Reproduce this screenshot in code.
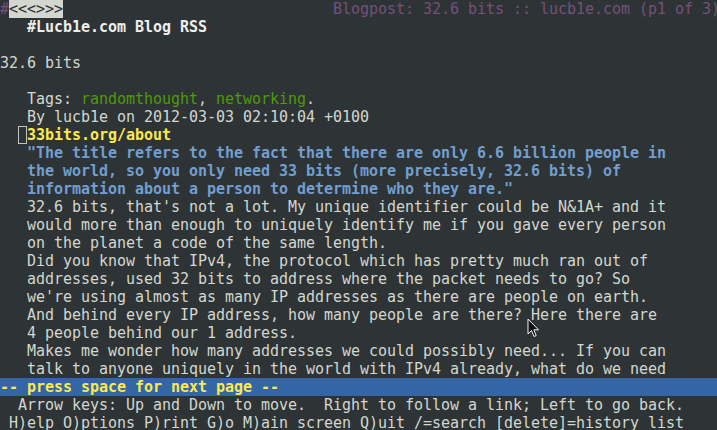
import React from 'react';

const body = [
  "   32.6 bits, that's not a lot. My unique identifier could be N&1A+ and it",
  '   would more than enough to uniquely identify me if you gave every person',
  '   on the planet a code of the same length.',
  '   Did you know that IPv4, the protocol which has pretty much ran out of',
  '   addresses, used 32 bits to address where the packet needs to go? So',
  "   we're using almost as many IP addresses as there are people on earth.",
  '   And behind every IP address, how many people are there? Here there are',
  '   4 people behind our 1 address.',
  '   Makes me wonder how many addresses we could possibly need... If you can',
  '   talk to anyone uniquely in the world with IPv4 already, what do we need',
];

const quote = [
  '   "The title refers to the fact that there are only 6.6 billion people in',
  '   the world, so you only need 33 bits (more precisely, 32.6 bits) of',
  '   information about a person to determine who they are."',
];

function Row({ children, className = '' }: { children?: React.ReactNode; className?: string }) {
  return <div className={`h-[18px] leading-[18px] whitespace-pre ${className}`}>{children ?? ' '}</div>;
}

function Pointer() {
  return (
    <svg className="absolute left-[527px] top-[318px]" width="13" height="20" viewBox="0 0 13 20">
      <path d="M1 1 L1 16 L4.5 12.5 L7 18.5 L9.2 17.5 L6.8 11.8 L11.5 11.8 Z" fill="#111" stroke="#f2f2f2" strokeWidth="1" strokeLinejoin="round" />
    </svg>
  );
}

export default function App() {
  return (
    <div
      className="relative w-[717px] h-[430px] overflow-hidden bg-[#2e3436] text-[#d3d7cf] text-[15px] tracking-[-0.03px]"
      style={{ fontFamily: '"DejaVu Sans Mono", "Liberation Mono", monospace' }}
    >
      {/* title bar */}
      <Row className="text-[#75507b]">
        #<span className="bg-[#d3d7cf] text-[#2e3436]">{'<<<>>>'}</span>
        {'                              '}Blogpost: 32.6 bits :: lucb1e.com (p1 of 3)
      </Row>
      <Row className="font-bold text-[#eeeeec]">{'   #Lucb1e.com Blog RSS'}</Row>
      <Row />
      <Row>32.6 bits</Row>
      <Row />
      <Row>
        {'   Tags: '}
        <span className="text-[#4e9a06]">randomthought</span>,{' '}
        <span className="text-[#4e9a06]">networking</span>.
      </Row>
      <Row>{'   By lucb1e on 2012-03-03 02:10:04 +0100'}</Row>
      <Row>
        {'  '}
        <span className="outline outline-1 -outline-offset-1 outline-[#c3c6c0]">{' '}</span>
        <span className="font-bold text-[#fce94f]">33bits.org/about</span>
      </Row>
      {quote.map((l, i) => (
        <Row key={i} className="font-bold text-[#729fcf]">{l}</Row>
      ))}
      {body.map((l, i) => (
        <Row key={i}>{l}</Row>
      ))}
      {/* status line */}
      <Row className="bg-[#3465a4] text-[#fce94f] font-bold">-- press space for next page --</Row>
      <Row>{'  Arrow keys: Up and Down to move.  Right to follow a link; Left to go back.'}</Row>
      <Row>{' H)elp O)ptions P)rint G)o M)ain screen Q)uit /=search [delete]=history list'}</Row>

      <Pointer />
    </div>
  );
}
